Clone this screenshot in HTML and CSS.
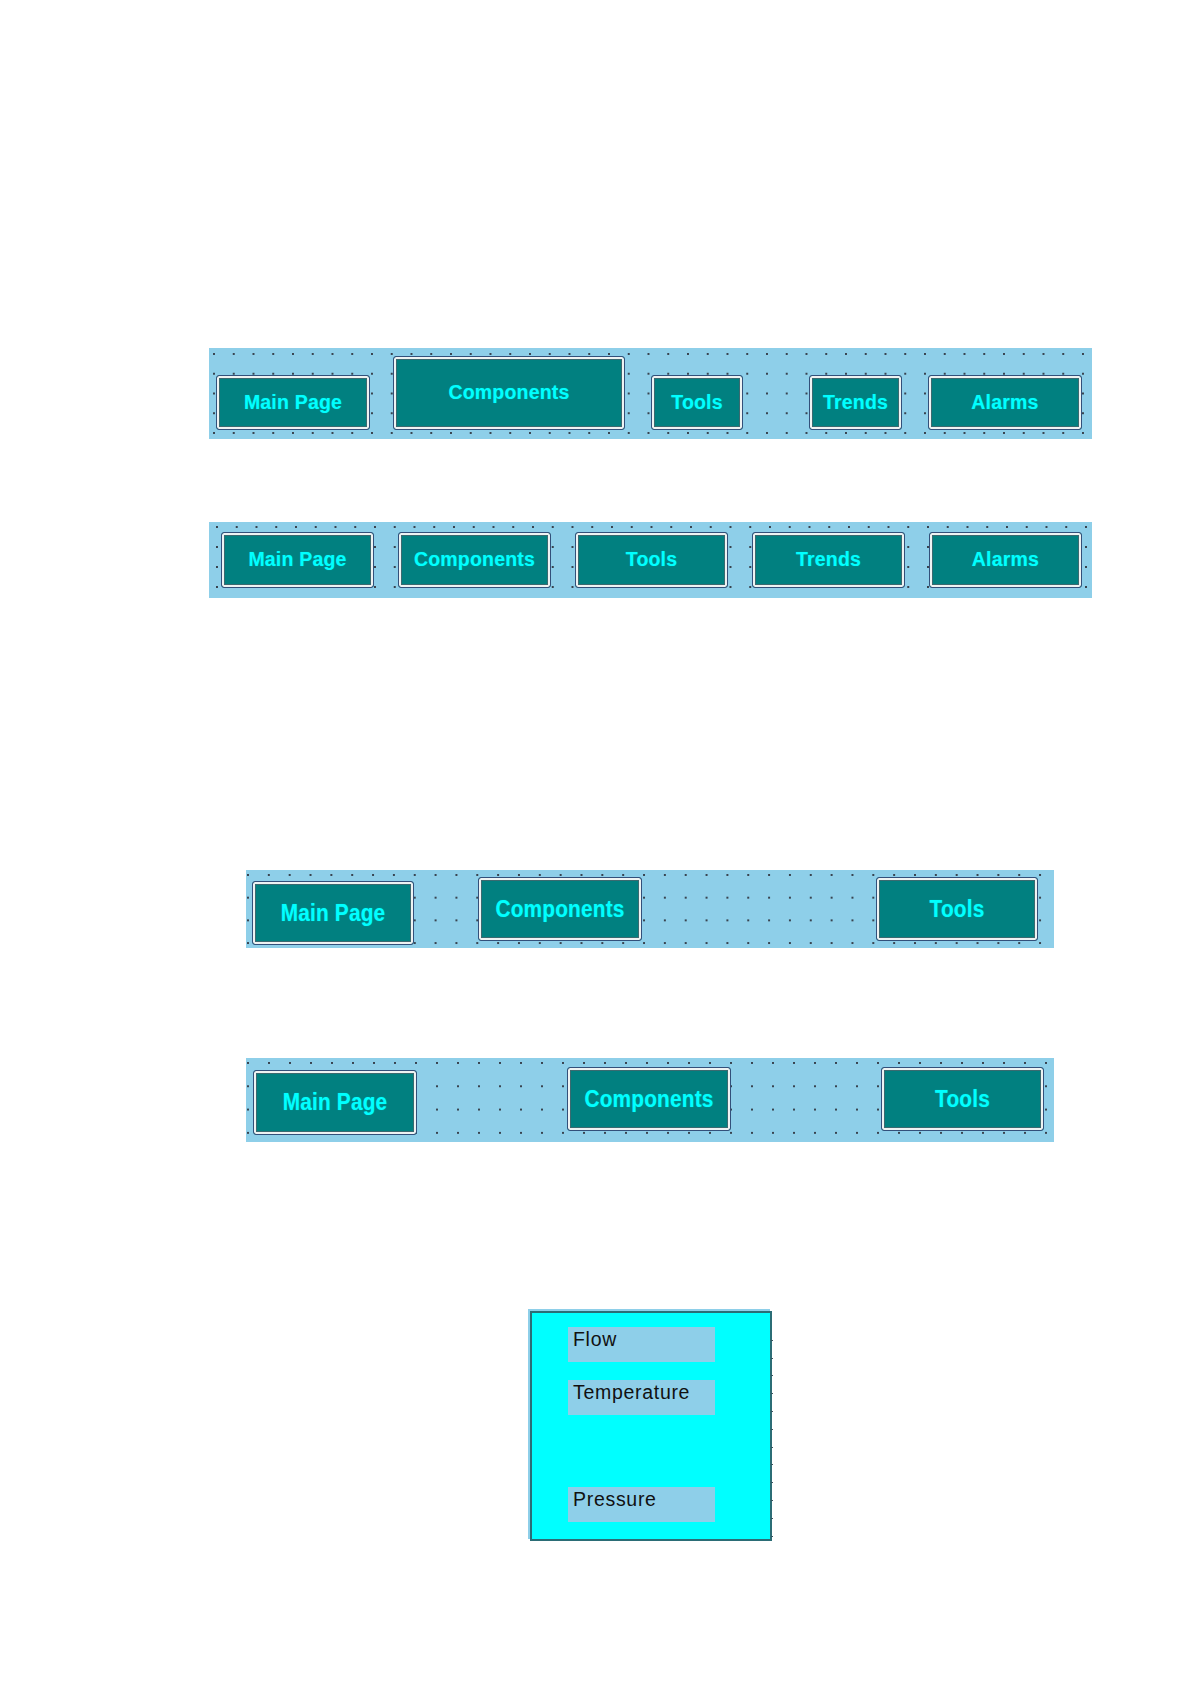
FILE: index.html
```html
<!DOCTYPE html>
<html lang="en">
<head>
<meta charset="utf-8">
<title>Navigation bars</title>
<link rel="stylesheet" href="styles.css">
</head>
<body>
<main class="page">
  <div class="bar bar1">
    <div class="btn b1-main"><span>Main Page</span></div>
    <div class="btn b1-comp"><span>Components</span></div>
    <div class="btn b1-tools"><span>Tools</span></div>
    <div class="btn b1-trends"><span>Trends</span></div>
    <div class="btn b1-alarms"><span>Alarms</span></div>
  </div>

  <div class="bar bar2">
    <div class="btn b2"><span>Main Page</span></div>
    <div class="btn b2"><span>Components</span></div>
    <div class="btn b2"><span>Tools</span></div>
    <div class="btn b2"><span>Trends</span></div>
    <div class="btn b2"><span>Alarms</span></div>
  </div>

  <div class="bar bar3">
    <div class="btn big b3-main"><span>Main Page</span></div>
    <div class="btn big b3-comp"><span>Components</span></div>
    <div class="btn big b3-tools"><span>Tools</span></div>
  </div>

  <div class="bar bar4">
    <div class="btn big b4-main"><span>Main Page</span></div>
    <div class="btn big b4-comp"><span>Components</span></div>
    <div class="btn big b4-tools"><span>Tools</span></div>
  </div>

  <div class="panel">
    <div class="label l-flow">Flow</div>
    <div class="label l-temp">Temperature</div>
    <div class="label l-press">Pressure</div>
  </div>
</main>
</body>
</html>
```

FILE: styles.css
```css
html, body {
  margin: 0;
  padding: 0;
  background: #ffffff;
}

.page {
  padding-top: 348px;
  display: flex;
  flex-direction: column;
  align-items: flex-start;
  font-family: "Liberation Sans", Arial, sans-serif;
}

.bar {
  box-sizing: border-box;
  display: flex;
  background-color: #8ecfe9;
  background-repeat: repeat;
}

/* bar 1 */
.bar1 {
  margin-left: 209px;
  width: 883px;
  height: 91px;
  padding: 0 10px 9px 7px;
  align-items: flex-end;
  background-image: radial-gradient(circle at 1px 1px, #38434f 0.8px, rgba(56,67,79,0) 1.3px);
  background-size: 19.75px 19.75px;
  background-position: 4px 5px;
}

.bar2 {
  margin-top: 83px;
  margin-left: 209px;
  width: 883px;
  height: 76px;
  padding: 10px 10px 0 12px;
  align-items: flex-start;
  gap: 24px;
  background-image: radial-gradient(circle at 1px 1px, #38434f 0.8px, rgba(56,67,79,0) 1.3px);
  background-size: 19.75px 20px;
  background-position: 7px 4px;
}

.bar3 {
  margin-top: 272px;
  margin-left: 246px;
  width: 808px;
  height: 78px;
  padding: 7px 16px 0 6px;
  align-items: flex-start;
  background-image: radial-gradient(circle at 1px 1px, #38434f 0.8px, rgba(56,67,79,0) 1.3px);
  background-size: 20.85px 22.7px;
  background-position: 1px 4px;
}

.bar4 {
  margin-top: 110px;
  margin-left: 246px;
  width: 808px;
  height: 84px;
  padding: 9px 10px 0 7px;
  align-items: flex-start;
  background-image: radial-gradient(circle at 1px 1px, #38434f 0.8px, rgba(56,67,79,0) 1.3px);
  background-size: 21px 23.3px;
  background-position: 1px 4px;
}

/* buttons */
.btn {
  box-sizing: border-box;
  flex: none;
  display: flex;
  align-items: center;
  justify-content: center;
  background: #018080;
  border: 1px solid #33507a;
  border-radius: 3px;
  box-shadow: inset 0 0 0 2px #eef3f3, inset 0 0 0 3px #3b6a70;
  color: #00ffff;
  font-weight: bold;
  font-size: 19.5px;
  line-height: 1;
  letter-spacing: 0.2px;
  white-space: nowrap;
  text-shadow: 0 0 1px rgba(0, 255, 255, 0.45);
}

.btn span {
  display: inline-block;
}

.btn.big {
  font-size: 20.8px;
}

.btn.big span {
  transform: scaleY(1.12);
}

.b1-main { width: 154px; height: 55px; }
.b1-comp { width: 232px; height: 74px; margin-left: 23px; }
.b1-tools { width: 92px; height: 55px; margin-left: 26px; }
.b1-trends { width: 93px; height: 55px; margin-left: 66px; }
.b1-alarms { width: 154px; height: 55px; margin-left: 26px; }

.b2 { width: 153px; height: 56px; }

.b3-main { width: 162px; height: 64px; margin-top: 4px; }
.b3-comp { width: 164px; height: 64px; margin-left: 64px; }
.b3-tools { width: 162px; height: 64px; margin-left: 234px; }

.b4-main { width: 164px; height: 65px; margin-top: 3px; }
.b4-comp { width: 164px; height: 64px; margin-left: 150px; }
.b4-tools { width: 163px; height: 64px; margin-left: 150px; }

/* panel */
.panel {
  position: relative;
  box-sizing: border-box;
  margin-top: 169px;
  margin-left: 530px;
  width: 242px;
  height: 230px;
  padding: 14px 0 0 36px;
  display: flex;
  flex-direction: column;
  align-items: flex-start;
  background: #00ffff;
  border: 2px solid #2b6d76;
  box-shadow: -2px -2px 0 0 #8ecfe9;
}

.panel::after {
  content: "";
  position: absolute;
  right: -3px;
  top: 10px;
  width: 2px;
  bottom: 0;
  background-image: repeating-linear-gradient(to bottom, transparent 0, transparent 16.8px, #3a5560 16.8px, #3a5560 17.8px);
}

.panel::before {
  content: "";
  position: absolute;
  left: 0;
  right: 0;
  bottom: -4px;
  height: 2px;
  background-image: repeating-linear-gradient(to right, transparent 0, transparent 17.3px, #3a5560 17.3px, #3a5560 18.3px);
}

.label {
  box-sizing: border-box;
  width: 147px;
  height: 35px;
  padding: 3px 0 0 5px;
  background: #8ecfe9;
  color: #111111;
  font-size: 19.5px;
  line-height: 1;
  letter-spacing: 0.7px;
}

.l-temp { margin-top: 18px; }
.l-press { margin-top: 72px; }
```
